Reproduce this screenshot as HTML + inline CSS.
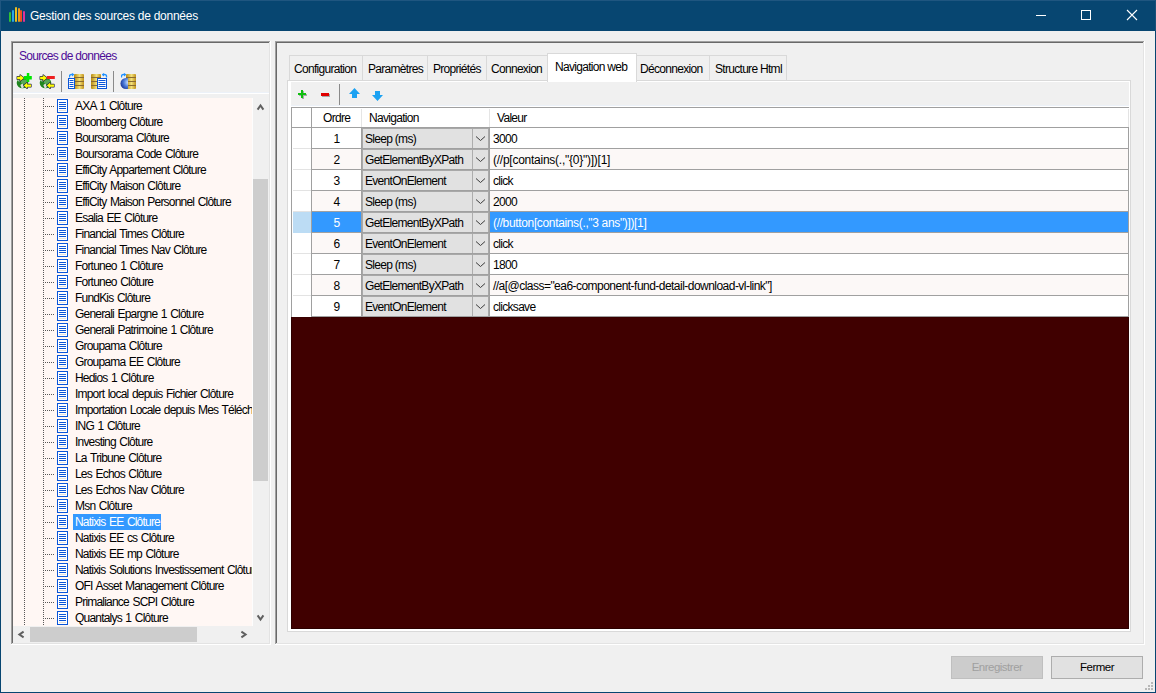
<!DOCTYPE html><html><head><meta charset="utf-8"><style>
html,body{margin:0;padding:0;}
body{width:1156px;height:693px;position:relative;overflow:hidden;background:#f0f0f0;font-family:"Liberation Sans",sans-serif;}
div,span,svg{position:absolute;}
.t{white-space:nowrap;line-height:14px;}
</style></head><body>
<div style="left:0px;top:0px;width:1156px;height:31px;background:#074671;"></div>
<div style="left:0px;top:31px;width:1px;height:662px;background:#074671;"></div>
<div style="left:1155px;top:31px;width:1px;height:662px;background:#074671;"></div>
<div style="left:0px;top:692px;width:1156px;height:1px;background:#074671;"></div>
<div style="left:0px;top:0px;width:1156px;height:1px;background:#1f5680;"></div>
<div style="left:0px;top:0px;width:1px;height:31px;background:#1f5680;"></div>
<div style="left:1155px;top:0px;width:1px;height:31px;background:#1a5079;"></div>
<div style="left:9px;top:12px;width:2px;height:10px;background:#2fc234;border-radius:1px;"></div>
<div style="left:12px;top:10px;width:2px;height:12px;background:#2aa8e6;border-radius:1px;"></div>
<div style="left:15px;top:7px;width:2px;height:15px;background:#e8c020;border-radius:1px;"></div>
<div style="left:18px;top:8px;width:2px;height:14px;background:#f09a1a;border-radius:1px;"></div>
<div style="left:20px;top:10px;width:2px;height:12px;background:#f0501e;border-radius:1px;"></div>
<div style="left:23px;top:11px;width:2px;height:11px;background:#e0309a;border-radius:1px;"></div>
<span class="t" style="left:30px;top:8px;color:#fff;font-size:12px;letter-spacing:-0.25px;line-height:16px;">Gestion des sources de données</span>
<div style="left:1036px;top:15px;width:10px;height:1px;background:#fff;"></div>
<div style="left:1081px;top:10px;width:10px;height:10px;background:transparent;border:1px solid #fff;box-sizing:border-box;"></div>
<svg style="left:1126px;top:9px" width="12" height="12" viewBox="0 0 12 12"><path d="M1 1L11 11M11 1L1 11" stroke="#fff" stroke-width="1.1"/></svg>
<div style="left:11px;top:41px;width:259px;height:1px;background:#a0a0a0;"></div>
<div style="left:11px;top:41px;width:1px;height:603px;background:#a0a0a0;"></div>
<div style="left:12px;top:42px;width:257px;height:1px;background:#696969;"></div>
<div style="left:12px;top:42px;width:1px;height:601px;background:#696969;"></div>
<div style="left:12px;top:643px;width:258px;height:1px;background:#e3e3e3;"></div>
<div style="left:269px;top:42px;width:1px;height:602px;background:#e3e3e3;"></div>
<div style="left:11px;top:644px;width:260px;height:1px;background:#fff;"></div>
<div style="left:270px;top:41px;width:1px;height:604px;background:#fff;"></div>
<div style="left:275px;top:41px;width:869px;height:1px;background:#a0a0a0;"></div>
<div style="left:275px;top:41px;width:1px;height:603px;background:#a0a0a0;"></div>
<div style="left:276px;top:42px;width:867px;height:1px;background:#696969;"></div>
<div style="left:276px;top:42px;width:1px;height:601px;background:#696969;"></div>
<div style="left:276px;top:643px;width:868px;height:1px;background:#e3e3e3;"></div>
<div style="left:1143px;top:42px;width:1px;height:602px;background:#e3e3e3;"></div>
<div style="left:275px;top:644px;width:870px;height:1px;background:#fff;"></div>
<div style="left:1144px;top:41px;width:1px;height:604px;background:#fff;"></div>
<span class="t" style="left:19px;top:49px;color:#4e0c98;font-size:12px;letter-spacing:-0.7px;">Sources de données</span>
<div style="left:13px;top:92px;width:256px;height:1px;background:#ecf1f8;"></div>
<div style="left:13px;top:93px;width:256px;height:1px;background:#fff;"></div>
<div style="left:61px;top:71px;width:1px;height:21px;background:#8a8a8a;"></div>
<div style="left:113px;top:71px;width:1px;height:21px;background:#8a8a8a;"></div>
<svg style="left:16px;top:73px" width="16" height="16" viewBox="0 0 16 16"><ellipse cx="6.5" cy="10" rx="5.8" ry="5.2" fill="#1f861f"/><ellipse cx="8" cy="8.8" rx="3.2" ry="2.2" fill="#58a858"/><path d="M4.3 12L6.5 10.5L8 13L7 15.3L5.5 15Z" fill="#dcdcdc"/><path d="M1.5 7.5L3.5 7L3.5 9Z" fill="#d0e0d0"/><path d="M1.2 3.7H4.2V1.9L7.9 5L4.2 8.1V6.3H1.2Z" fill="#ffff00" stroke="#28284a" stroke-width="1.3" paint-order="stroke" stroke-linejoin="round"/><rect x="10.8" y="0" width="2.5" height="9" fill="#00e600"/><rect x="7.8" y="3" width="8" height="3.5" fill="#00e600"/><path d="M15 11.4H11.2V9.6L7.9 12.6L11.2 15.4V13.8H15Z" fill="#ffff00" stroke="#28284a" stroke-width="1.3" paint-order="stroke" stroke-linejoin="round"/></svg>
<svg style="left:39px;top:73px" width="16" height="16" viewBox="0 0 16 16"><ellipse cx="6.5" cy="10" rx="5.8" ry="5.2" fill="#1f861f"/><ellipse cx="8" cy="8.8" rx="3.2" ry="2.2" fill="#58a858"/><path d="M4.3 12L6.5 10.5L8 13L7 15.3L5.5 15Z" fill="#dcdcdc"/><path d="M1.5 7.5L3.5 7L3.5 9Z" fill="#d0e0d0"/><path d="M1.2 3.7H4.2V1.9L7.9 5L4.2 8.1V6.3H1.2Z" fill="#ffff00" stroke="#28284a" stroke-width="1.3" paint-order="stroke" stroke-linejoin="round"/><rect x="7.8" y="3" width="8" height="3" fill="#ee2020"/><path d="M15 11.4H11.2V9.6L7.9 12.6L11.2 15.4V13.8H15Z" fill="#ffff00" stroke="#28284a" stroke-width="1.3" paint-order="stroke" stroke-linejoin="round"/></svg>
<svg style="left:74px;top:74px" width="10" height="15" viewBox="0 0 10 15"><defs><linearGradient id="gg74" x1="0" x2="1"><stop offset="0" stop-color="#b88a10"/><stop offset="0.55" stop-color="#f2e07a"/><stop offset="1" stop-color="#c09018"/></linearGradient></defs><rect x="0" y="0" width="10" height="15" rx="1" fill="url(#gg74)"/><rect x="0" y="3" width="10" height="1" fill="#8a6a30"/><rect x="0" y="7" width="10" height="1" fill="#8a6a30"/><rect x="0" y="11" width="10" height="1" fill="#8a6a30"/></svg>
<svg style="left:68px;top:78px" width="7" height="11" viewBox="0 0 7 11"><rect x="0.5" y="0.5" width="6" height="10" fill="#fff" stroke="#0a55d8" stroke-width="1"/><rect x="1.5" y="2" width="4" height="1" fill="#0a55d8"/><rect x="1.5" y="4" width="4" height="1" fill="#0a55d8"/><rect x="1.5" y="6" width="4" height="1" fill="#0a55d8"/><rect x="1.5" y="8" width="4" height="1" fill="#0a55d8"/></svg>
<svg style="left:69px;top:73px" width="6" height="5" viewBox="0 0 6 5"><g ><path d="M0.5 4.5V3C0.5 1.8 1.5 1.5 2.5 1.5H3.5" stroke="#1e90ff" stroke-width="1.3" fill="none"/><path d="M3 0L5.5 1.5L3 3.5Z" fill="#1e90ff"/></g></svg>
<svg style="left:91px;top:74px" width="10" height="15" viewBox="0 0 10 15"><defs><linearGradient id="gg91" x1="0" x2="1"><stop offset="0" stop-color="#b88a10"/><stop offset="0.55" stop-color="#f2e07a"/><stop offset="1" stop-color="#c09018"/></linearGradient></defs><rect x="0" y="0" width="10" height="15" rx="1" fill="url(#gg91)"/><rect x="0" y="3" width="10" height="1" fill="#8a6a30"/><rect x="0" y="7" width="10" height="1" fill="#8a6a30"/><rect x="0" y="11" width="10" height="1" fill="#8a6a30"/></svg>
<svg style="left:97px;top:78px" width="10" height="11" viewBox="0 0 10 11"><rect x="0.5" y="0.5" width="9" height="10" fill="#fff" stroke="#0a55d8" stroke-width="1"/><rect x="1.5" y="2" width="7" height="1" fill="#0a55d8"/><rect x="1.5" y="4" width="7" height="1" fill="#0a55d8"/><rect x="1.5" y="6" width="7" height="1" fill="#0a55d8"/><rect x="1.5" y="8" width="7" height="1" fill="#0a55d8"/></svg>
<svg style="left:102px;top:73px" width="6" height="5" viewBox="0 0 6 5"><g transform="translate(5,0) scale(-1,1)"><path d="M0.5 4.5V3C0.5 1.8 1.5 1.5 2.5 1.5H3.5" stroke="#1e90ff" stroke-width="1.3" fill="none"/><path d="M3 0L5.5 1.5L3 3.5Z" fill="#1e90ff"/></g></svg>
<svg style="left:126px;top:74px" width="10" height="15" viewBox="0 0 10 15"><defs><linearGradient id="gg126" x1="0" x2="1"><stop offset="0" stop-color="#b88a10"/><stop offset="0.55" stop-color="#f2e07a"/><stop offset="1" stop-color="#c09018"/></linearGradient></defs><rect x="0" y="0" width="10" height="15" rx="1" fill="url(#gg126)"/><rect x="0" y="3" width="10" height="1" fill="#8a6a30"/><rect x="0" y="7" width="10" height="1" fill="#8a6a30"/><rect x="0" y="11" width="10" height="1" fill="#8a6a30"/></svg>
<svg style="left:120px;top:78px" width="8" height="11" viewBox="0 0 8 11"><defs><radialGradient id="gb" cx="0.7" cy="0.4" r="0.8"><stop offset="0" stop-color="#cfe4ff"/><stop offset="0.5" stop-color="#4a7ad8"/><stop offset="1" stop-color="#10288a"/></radialGradient></defs><ellipse cx="6" cy="5.5" rx="5.5" ry="5.5" fill="url(#gb)"/></svg>
<svg style="left:121px;top:73px" width="6" height="5" viewBox="0 0 6 5"><g ><path d="M0.5 4.5V3C0.5 1.8 1.5 1.5 2.5 1.5H3.5" stroke="#1e90ff" stroke-width="1.3" fill="none"/><path d="M3 0L5.5 1.5L3 3.5Z" fill="#1e90ff"/></g></svg>
<div style="left:13px;top:98px;width:240px;height:528px;background:#fff7f4;"></div>
<div style="left:14px;top:98px;width:239px;height:528px;overflow:hidden">
<svg style="left:-14px;top:-98px" width="260" height="630"><path d="M24 98h1v1h-1zM43 98h1v1h-1zM24 100h1v1h-1zM43 100h1v1h-1zM24 102h1v1h-1zM43 102h1v1h-1zM24 104h1v1h-1zM43 104h1v1h-1zM24 106h1v1h-1zM43 106h1v1h-1zM24 108h1v1h-1zM43 108h1v1h-1zM24 110h1v1h-1zM43 110h1v1h-1zM24 112h1v1h-1zM43 112h1v1h-1zM24 114h1v1h-1zM43 114h1v1h-1zM24 116h1v1h-1zM43 116h1v1h-1zM24 118h1v1h-1zM43 118h1v1h-1zM24 120h1v1h-1zM43 120h1v1h-1zM24 122h1v1h-1zM43 122h1v1h-1zM24 124h1v1h-1zM43 124h1v1h-1zM24 126h1v1h-1zM43 126h1v1h-1zM24 128h1v1h-1zM43 128h1v1h-1zM24 130h1v1h-1zM43 130h1v1h-1zM24 132h1v1h-1zM43 132h1v1h-1zM24 134h1v1h-1zM43 134h1v1h-1zM24 136h1v1h-1zM43 136h1v1h-1zM24 138h1v1h-1zM43 138h1v1h-1zM24 140h1v1h-1zM43 140h1v1h-1zM24 142h1v1h-1zM43 142h1v1h-1zM24 144h1v1h-1zM43 144h1v1h-1zM24 146h1v1h-1zM43 146h1v1h-1zM24 148h1v1h-1zM43 148h1v1h-1zM24 150h1v1h-1zM43 150h1v1h-1zM24 152h1v1h-1zM43 152h1v1h-1zM24 154h1v1h-1zM43 154h1v1h-1zM24 156h1v1h-1zM43 156h1v1h-1zM24 158h1v1h-1zM43 158h1v1h-1zM24 160h1v1h-1zM43 160h1v1h-1zM24 162h1v1h-1zM43 162h1v1h-1zM24 164h1v1h-1zM43 164h1v1h-1zM24 166h1v1h-1zM43 166h1v1h-1zM24 168h1v1h-1zM43 168h1v1h-1zM24 170h1v1h-1zM43 170h1v1h-1zM24 172h1v1h-1zM43 172h1v1h-1zM24 174h1v1h-1zM43 174h1v1h-1zM24 176h1v1h-1zM43 176h1v1h-1zM24 178h1v1h-1zM43 178h1v1h-1zM24 180h1v1h-1zM43 180h1v1h-1zM24 182h1v1h-1zM43 182h1v1h-1zM24 184h1v1h-1zM43 184h1v1h-1zM24 186h1v1h-1zM43 186h1v1h-1zM24 188h1v1h-1zM43 188h1v1h-1zM24 190h1v1h-1zM43 190h1v1h-1zM24 192h1v1h-1zM43 192h1v1h-1zM24 194h1v1h-1zM43 194h1v1h-1zM24 196h1v1h-1zM43 196h1v1h-1zM24 198h1v1h-1zM43 198h1v1h-1zM24 200h1v1h-1zM43 200h1v1h-1zM24 202h1v1h-1zM43 202h1v1h-1zM24 204h1v1h-1zM43 204h1v1h-1zM24 206h1v1h-1zM43 206h1v1h-1zM24 208h1v1h-1zM43 208h1v1h-1zM24 210h1v1h-1zM43 210h1v1h-1zM24 212h1v1h-1zM43 212h1v1h-1zM24 214h1v1h-1zM43 214h1v1h-1zM24 216h1v1h-1zM43 216h1v1h-1zM24 218h1v1h-1zM43 218h1v1h-1zM24 220h1v1h-1zM43 220h1v1h-1zM24 222h1v1h-1zM43 222h1v1h-1zM24 224h1v1h-1zM43 224h1v1h-1zM24 226h1v1h-1zM43 226h1v1h-1zM24 228h1v1h-1zM43 228h1v1h-1zM24 230h1v1h-1zM43 230h1v1h-1zM24 232h1v1h-1zM43 232h1v1h-1zM24 234h1v1h-1zM43 234h1v1h-1zM24 236h1v1h-1zM43 236h1v1h-1zM24 238h1v1h-1zM43 238h1v1h-1zM24 240h1v1h-1zM43 240h1v1h-1zM24 242h1v1h-1zM43 242h1v1h-1zM24 244h1v1h-1zM43 244h1v1h-1zM24 246h1v1h-1zM43 246h1v1h-1zM24 248h1v1h-1zM43 248h1v1h-1zM24 250h1v1h-1zM43 250h1v1h-1zM24 252h1v1h-1zM43 252h1v1h-1zM24 254h1v1h-1zM43 254h1v1h-1zM24 256h1v1h-1zM43 256h1v1h-1zM24 258h1v1h-1zM43 258h1v1h-1zM24 260h1v1h-1zM43 260h1v1h-1zM24 262h1v1h-1zM43 262h1v1h-1zM24 264h1v1h-1zM43 264h1v1h-1zM24 266h1v1h-1zM43 266h1v1h-1zM24 268h1v1h-1zM43 268h1v1h-1zM24 270h1v1h-1zM43 270h1v1h-1zM24 272h1v1h-1zM43 272h1v1h-1zM24 274h1v1h-1zM43 274h1v1h-1zM24 276h1v1h-1zM43 276h1v1h-1zM24 278h1v1h-1zM43 278h1v1h-1zM24 280h1v1h-1zM43 280h1v1h-1zM24 282h1v1h-1zM43 282h1v1h-1zM24 284h1v1h-1zM43 284h1v1h-1zM24 286h1v1h-1zM43 286h1v1h-1zM24 288h1v1h-1zM43 288h1v1h-1zM24 290h1v1h-1zM43 290h1v1h-1zM24 292h1v1h-1zM43 292h1v1h-1zM24 294h1v1h-1zM43 294h1v1h-1zM24 296h1v1h-1zM43 296h1v1h-1zM24 298h1v1h-1zM43 298h1v1h-1zM24 300h1v1h-1zM43 300h1v1h-1zM24 302h1v1h-1zM43 302h1v1h-1zM24 304h1v1h-1zM43 304h1v1h-1zM24 306h1v1h-1zM43 306h1v1h-1zM24 308h1v1h-1zM43 308h1v1h-1zM24 310h1v1h-1zM43 310h1v1h-1zM24 312h1v1h-1zM43 312h1v1h-1zM24 314h1v1h-1zM43 314h1v1h-1zM24 316h1v1h-1zM43 316h1v1h-1zM24 318h1v1h-1zM43 318h1v1h-1zM24 320h1v1h-1zM43 320h1v1h-1zM24 322h1v1h-1zM43 322h1v1h-1zM24 324h1v1h-1zM43 324h1v1h-1zM24 326h1v1h-1zM43 326h1v1h-1zM24 328h1v1h-1zM43 328h1v1h-1zM24 330h1v1h-1zM43 330h1v1h-1zM24 332h1v1h-1zM43 332h1v1h-1zM24 334h1v1h-1zM43 334h1v1h-1zM24 336h1v1h-1zM43 336h1v1h-1zM24 338h1v1h-1zM43 338h1v1h-1zM24 340h1v1h-1zM43 340h1v1h-1zM24 342h1v1h-1zM43 342h1v1h-1zM24 344h1v1h-1zM43 344h1v1h-1zM24 346h1v1h-1zM43 346h1v1h-1zM24 348h1v1h-1zM43 348h1v1h-1zM24 350h1v1h-1zM43 350h1v1h-1zM24 352h1v1h-1zM43 352h1v1h-1zM24 354h1v1h-1zM43 354h1v1h-1zM24 356h1v1h-1zM43 356h1v1h-1zM24 358h1v1h-1zM43 358h1v1h-1zM24 360h1v1h-1zM43 360h1v1h-1zM24 362h1v1h-1zM43 362h1v1h-1zM24 364h1v1h-1zM43 364h1v1h-1zM24 366h1v1h-1zM43 366h1v1h-1zM24 368h1v1h-1zM43 368h1v1h-1zM24 370h1v1h-1zM43 370h1v1h-1zM24 372h1v1h-1zM43 372h1v1h-1zM24 374h1v1h-1zM43 374h1v1h-1zM24 376h1v1h-1zM43 376h1v1h-1zM24 378h1v1h-1zM43 378h1v1h-1zM24 380h1v1h-1zM43 380h1v1h-1zM24 382h1v1h-1zM43 382h1v1h-1zM24 384h1v1h-1zM43 384h1v1h-1zM24 386h1v1h-1zM43 386h1v1h-1zM24 388h1v1h-1zM43 388h1v1h-1zM24 390h1v1h-1zM43 390h1v1h-1zM24 392h1v1h-1zM43 392h1v1h-1zM24 394h1v1h-1zM43 394h1v1h-1zM24 396h1v1h-1zM43 396h1v1h-1zM24 398h1v1h-1zM43 398h1v1h-1zM24 400h1v1h-1zM43 400h1v1h-1zM24 402h1v1h-1zM43 402h1v1h-1zM24 404h1v1h-1zM43 404h1v1h-1zM24 406h1v1h-1zM43 406h1v1h-1zM24 408h1v1h-1zM43 408h1v1h-1zM24 410h1v1h-1zM43 410h1v1h-1zM24 412h1v1h-1zM43 412h1v1h-1zM24 414h1v1h-1zM43 414h1v1h-1zM24 416h1v1h-1zM43 416h1v1h-1zM24 418h1v1h-1zM43 418h1v1h-1zM24 420h1v1h-1zM43 420h1v1h-1zM24 422h1v1h-1zM43 422h1v1h-1zM24 424h1v1h-1zM43 424h1v1h-1zM24 426h1v1h-1zM43 426h1v1h-1zM24 428h1v1h-1zM43 428h1v1h-1zM24 430h1v1h-1zM43 430h1v1h-1zM24 432h1v1h-1zM43 432h1v1h-1zM24 434h1v1h-1zM43 434h1v1h-1zM24 436h1v1h-1zM43 436h1v1h-1zM24 438h1v1h-1zM43 438h1v1h-1zM24 440h1v1h-1zM43 440h1v1h-1zM24 442h1v1h-1zM43 442h1v1h-1zM24 444h1v1h-1zM43 444h1v1h-1zM24 446h1v1h-1zM43 446h1v1h-1zM24 448h1v1h-1zM43 448h1v1h-1zM24 450h1v1h-1zM43 450h1v1h-1zM24 452h1v1h-1zM43 452h1v1h-1zM24 454h1v1h-1zM43 454h1v1h-1zM24 456h1v1h-1zM43 456h1v1h-1zM24 458h1v1h-1zM43 458h1v1h-1zM24 460h1v1h-1zM43 460h1v1h-1zM24 462h1v1h-1zM43 462h1v1h-1zM24 464h1v1h-1zM43 464h1v1h-1zM24 466h1v1h-1zM43 466h1v1h-1zM24 468h1v1h-1zM43 468h1v1h-1zM24 470h1v1h-1zM43 470h1v1h-1zM24 472h1v1h-1zM43 472h1v1h-1zM24 474h1v1h-1zM43 474h1v1h-1zM24 476h1v1h-1zM43 476h1v1h-1zM24 478h1v1h-1zM43 478h1v1h-1zM24 480h1v1h-1zM43 480h1v1h-1zM24 482h1v1h-1zM43 482h1v1h-1zM24 484h1v1h-1zM43 484h1v1h-1zM24 486h1v1h-1zM43 486h1v1h-1zM24 488h1v1h-1zM43 488h1v1h-1zM24 490h1v1h-1zM43 490h1v1h-1zM24 492h1v1h-1zM43 492h1v1h-1zM24 494h1v1h-1zM43 494h1v1h-1zM24 496h1v1h-1zM43 496h1v1h-1zM24 498h1v1h-1zM43 498h1v1h-1zM24 500h1v1h-1zM43 500h1v1h-1zM24 502h1v1h-1zM43 502h1v1h-1zM24 504h1v1h-1zM43 504h1v1h-1zM24 506h1v1h-1zM43 506h1v1h-1zM24 508h1v1h-1zM43 508h1v1h-1zM24 510h1v1h-1zM43 510h1v1h-1zM24 512h1v1h-1zM43 512h1v1h-1zM24 514h1v1h-1zM43 514h1v1h-1zM24 516h1v1h-1zM43 516h1v1h-1zM24 518h1v1h-1zM43 518h1v1h-1zM24 520h1v1h-1zM43 520h1v1h-1zM24 522h1v1h-1zM43 522h1v1h-1zM24 524h1v1h-1zM43 524h1v1h-1zM24 526h1v1h-1zM43 526h1v1h-1zM24 528h1v1h-1zM43 528h1v1h-1zM24 530h1v1h-1zM43 530h1v1h-1zM24 532h1v1h-1zM43 532h1v1h-1zM24 534h1v1h-1zM43 534h1v1h-1zM24 536h1v1h-1zM43 536h1v1h-1zM24 538h1v1h-1zM43 538h1v1h-1zM24 540h1v1h-1zM43 540h1v1h-1zM24 542h1v1h-1zM43 542h1v1h-1zM24 544h1v1h-1zM43 544h1v1h-1zM24 546h1v1h-1zM43 546h1v1h-1zM24 548h1v1h-1zM43 548h1v1h-1zM24 550h1v1h-1zM43 550h1v1h-1zM24 552h1v1h-1zM43 552h1v1h-1zM24 554h1v1h-1zM43 554h1v1h-1zM24 556h1v1h-1zM43 556h1v1h-1zM24 558h1v1h-1zM43 558h1v1h-1zM24 560h1v1h-1zM43 560h1v1h-1zM24 562h1v1h-1zM43 562h1v1h-1zM24 564h1v1h-1zM43 564h1v1h-1zM24 566h1v1h-1zM43 566h1v1h-1zM24 568h1v1h-1zM43 568h1v1h-1zM24 570h1v1h-1zM43 570h1v1h-1zM24 572h1v1h-1zM43 572h1v1h-1zM24 574h1v1h-1zM43 574h1v1h-1zM24 576h1v1h-1zM43 576h1v1h-1zM24 578h1v1h-1zM43 578h1v1h-1zM24 580h1v1h-1zM43 580h1v1h-1zM24 582h1v1h-1zM43 582h1v1h-1zM24 584h1v1h-1zM43 584h1v1h-1zM24 586h1v1h-1zM43 586h1v1h-1zM24 588h1v1h-1zM43 588h1v1h-1zM24 590h1v1h-1zM43 590h1v1h-1zM24 592h1v1h-1zM43 592h1v1h-1zM24 594h1v1h-1zM43 594h1v1h-1zM24 596h1v1h-1zM43 596h1v1h-1zM24 598h1v1h-1zM43 598h1v1h-1zM24 600h1v1h-1zM43 600h1v1h-1zM24 602h1v1h-1zM43 602h1v1h-1zM24 604h1v1h-1zM43 604h1v1h-1zM24 606h1v1h-1zM43 606h1v1h-1zM24 608h1v1h-1zM43 608h1v1h-1zM24 610h1v1h-1zM43 610h1v1h-1zM24 612h1v1h-1zM43 612h1v1h-1zM24 614h1v1h-1zM43 614h1v1h-1zM24 616h1v1h-1zM43 616h1v1h-1zM24 618h1v1h-1zM43 618h1v1h-1zM24 620h1v1h-1zM43 620h1v1h-1zM24 622h1v1h-1zM43 622h1v1h-1zM24 624h1v1h-1zM43 624h1v1h-1zM45 106h1v1h-1zM47 106h1v1h-1zM49 106h1v1h-1zM51 106h1v1h-1zM53 106h1v1h-1zM45 122h1v1h-1zM47 122h1v1h-1zM49 122h1v1h-1zM51 122h1v1h-1zM53 122h1v1h-1zM45 138h1v1h-1zM47 138h1v1h-1zM49 138h1v1h-1zM51 138h1v1h-1zM53 138h1v1h-1zM45 154h1v1h-1zM47 154h1v1h-1zM49 154h1v1h-1zM51 154h1v1h-1zM53 154h1v1h-1zM45 170h1v1h-1zM47 170h1v1h-1zM49 170h1v1h-1zM51 170h1v1h-1zM53 170h1v1h-1zM45 186h1v1h-1zM47 186h1v1h-1zM49 186h1v1h-1zM51 186h1v1h-1zM53 186h1v1h-1zM45 202h1v1h-1zM47 202h1v1h-1zM49 202h1v1h-1zM51 202h1v1h-1zM53 202h1v1h-1zM45 218h1v1h-1zM47 218h1v1h-1zM49 218h1v1h-1zM51 218h1v1h-1zM53 218h1v1h-1zM45 234h1v1h-1zM47 234h1v1h-1zM49 234h1v1h-1zM51 234h1v1h-1zM53 234h1v1h-1zM45 250h1v1h-1zM47 250h1v1h-1zM49 250h1v1h-1zM51 250h1v1h-1zM53 250h1v1h-1zM45 266h1v1h-1zM47 266h1v1h-1zM49 266h1v1h-1zM51 266h1v1h-1zM53 266h1v1h-1zM45 282h1v1h-1zM47 282h1v1h-1zM49 282h1v1h-1zM51 282h1v1h-1zM53 282h1v1h-1zM45 298h1v1h-1zM47 298h1v1h-1zM49 298h1v1h-1zM51 298h1v1h-1zM53 298h1v1h-1zM45 314h1v1h-1zM47 314h1v1h-1zM49 314h1v1h-1zM51 314h1v1h-1zM53 314h1v1h-1zM45 330h1v1h-1zM47 330h1v1h-1zM49 330h1v1h-1zM51 330h1v1h-1zM53 330h1v1h-1zM45 346h1v1h-1zM47 346h1v1h-1zM49 346h1v1h-1zM51 346h1v1h-1zM53 346h1v1h-1zM45 362h1v1h-1zM47 362h1v1h-1zM49 362h1v1h-1zM51 362h1v1h-1zM53 362h1v1h-1zM45 378h1v1h-1zM47 378h1v1h-1zM49 378h1v1h-1zM51 378h1v1h-1zM53 378h1v1h-1zM45 394h1v1h-1zM47 394h1v1h-1zM49 394h1v1h-1zM51 394h1v1h-1zM53 394h1v1h-1zM45 410h1v1h-1zM47 410h1v1h-1zM49 410h1v1h-1zM51 410h1v1h-1zM53 410h1v1h-1zM45 426h1v1h-1zM47 426h1v1h-1zM49 426h1v1h-1zM51 426h1v1h-1zM53 426h1v1h-1zM45 442h1v1h-1zM47 442h1v1h-1zM49 442h1v1h-1zM51 442h1v1h-1zM53 442h1v1h-1zM45 458h1v1h-1zM47 458h1v1h-1zM49 458h1v1h-1zM51 458h1v1h-1zM53 458h1v1h-1zM45 474h1v1h-1zM47 474h1v1h-1zM49 474h1v1h-1zM51 474h1v1h-1zM53 474h1v1h-1zM45 490h1v1h-1zM47 490h1v1h-1zM49 490h1v1h-1zM51 490h1v1h-1zM53 490h1v1h-1zM45 506h1v1h-1zM47 506h1v1h-1zM49 506h1v1h-1zM51 506h1v1h-1zM53 506h1v1h-1zM45 522h1v1h-1zM47 522h1v1h-1zM49 522h1v1h-1zM51 522h1v1h-1zM53 522h1v1h-1zM45 538h1v1h-1zM47 538h1v1h-1zM49 538h1v1h-1zM51 538h1v1h-1zM53 538h1v1h-1zM45 554h1v1h-1zM47 554h1v1h-1zM49 554h1v1h-1zM51 554h1v1h-1zM53 554h1v1h-1zM45 570h1v1h-1zM47 570h1v1h-1zM49 570h1v1h-1zM51 570h1v1h-1zM53 570h1v1h-1zM45 586h1v1h-1zM47 586h1v1h-1zM49 586h1v1h-1zM51 586h1v1h-1zM53 586h1v1h-1zM45 602h1v1h-1zM47 602h1v1h-1zM49 602h1v1h-1zM51 602h1v1h-1zM53 602h1v1h-1zM45 618h1v1h-1zM47 618h1v1h-1zM49 618h1v1h-1zM51 618h1v1h-1zM53 618h1v1h-1z" fill="#585858"/></svg>
<div style="left:43px;top:1px;width:9px;height:12px;border:1px solid #0a55d8;background:#fff"></div>
<div style="left:45px;top:4px;width:7px;height:1px;background:#0a55d8"></div><div style="left:45px;top:6px;width:7px;height:1px;background:#0a55d8"></div><div style="left:45px;top:8px;width:7px;height:1px;background:#0a55d8"></div><div style="left:45px;top:10px;width:7px;height:1px;background:#0a55d8"></div>
<div style="left:45px;top:12px;width:7px;height:1px;background:#e4e0da"></div>
<span class="t" style="left:61px;top:1px;color:#000;font-size:12px;letter-spacing:-0.8px;word-spacing:1px;">AXA 1 Clôture</span>
<div style="left:43px;top:17px;width:9px;height:12px;border:1px solid #0a55d8;background:#fff"></div>
<div style="left:45px;top:20px;width:7px;height:1px;background:#0a55d8"></div><div style="left:45px;top:22px;width:7px;height:1px;background:#0a55d8"></div><div style="left:45px;top:24px;width:7px;height:1px;background:#0a55d8"></div><div style="left:45px;top:26px;width:7px;height:1px;background:#0a55d8"></div>
<div style="left:45px;top:28px;width:7px;height:1px;background:#e4e0da"></div>
<span class="t" style="left:61px;top:17px;color:#000;font-size:12px;letter-spacing:-0.8px;word-spacing:1px;">Bloomberg Clôture</span>
<div style="left:43px;top:33px;width:9px;height:12px;border:1px solid #0a55d8;background:#fff"></div>
<div style="left:45px;top:36px;width:7px;height:1px;background:#0a55d8"></div><div style="left:45px;top:38px;width:7px;height:1px;background:#0a55d8"></div><div style="left:45px;top:40px;width:7px;height:1px;background:#0a55d8"></div><div style="left:45px;top:42px;width:7px;height:1px;background:#0a55d8"></div>
<div style="left:45px;top:44px;width:7px;height:1px;background:#e4e0da"></div>
<span class="t" style="left:61px;top:33px;color:#000;font-size:12px;letter-spacing:-0.8px;word-spacing:1px;">Boursorama Clôture</span>
<div style="left:43px;top:49px;width:9px;height:12px;border:1px solid #0a55d8;background:#fff"></div>
<div style="left:45px;top:52px;width:7px;height:1px;background:#0a55d8"></div><div style="left:45px;top:54px;width:7px;height:1px;background:#0a55d8"></div><div style="left:45px;top:56px;width:7px;height:1px;background:#0a55d8"></div><div style="left:45px;top:58px;width:7px;height:1px;background:#0a55d8"></div>
<div style="left:45px;top:60px;width:7px;height:1px;background:#e4e0da"></div>
<span class="t" style="left:61px;top:49px;color:#000;font-size:12px;letter-spacing:-0.8px;word-spacing:1px;">Boursorama Code Clôture</span>
<div style="left:43px;top:65px;width:9px;height:12px;border:1px solid #0a55d8;background:#fff"></div>
<div style="left:45px;top:68px;width:7px;height:1px;background:#0a55d8"></div><div style="left:45px;top:70px;width:7px;height:1px;background:#0a55d8"></div><div style="left:45px;top:72px;width:7px;height:1px;background:#0a55d8"></div><div style="left:45px;top:74px;width:7px;height:1px;background:#0a55d8"></div>
<div style="left:45px;top:76px;width:7px;height:1px;background:#e4e0da"></div>
<span class="t" style="left:61px;top:65px;color:#000;font-size:12px;letter-spacing:-0.8px;word-spacing:1px;">EffiCity Appartement Clôture</span>
<div style="left:43px;top:81px;width:9px;height:12px;border:1px solid #0a55d8;background:#fff"></div>
<div style="left:45px;top:84px;width:7px;height:1px;background:#0a55d8"></div><div style="left:45px;top:86px;width:7px;height:1px;background:#0a55d8"></div><div style="left:45px;top:88px;width:7px;height:1px;background:#0a55d8"></div><div style="left:45px;top:90px;width:7px;height:1px;background:#0a55d8"></div>
<div style="left:45px;top:92px;width:7px;height:1px;background:#e4e0da"></div>
<span class="t" style="left:61px;top:81px;color:#000;font-size:12px;letter-spacing:-0.8px;word-spacing:1px;">EffiCity Maison Clôture</span>
<div style="left:43px;top:97px;width:9px;height:12px;border:1px solid #0a55d8;background:#fff"></div>
<div style="left:45px;top:100px;width:7px;height:1px;background:#0a55d8"></div><div style="left:45px;top:102px;width:7px;height:1px;background:#0a55d8"></div><div style="left:45px;top:104px;width:7px;height:1px;background:#0a55d8"></div><div style="left:45px;top:106px;width:7px;height:1px;background:#0a55d8"></div>
<div style="left:45px;top:108px;width:7px;height:1px;background:#e4e0da"></div>
<span class="t" style="left:61px;top:97px;color:#000;font-size:12px;letter-spacing:-0.8px;word-spacing:1px;">EffiCity Maison Personnel Clôture</span>
<div style="left:43px;top:113px;width:9px;height:12px;border:1px solid #0a55d8;background:#fff"></div>
<div style="left:45px;top:116px;width:7px;height:1px;background:#0a55d8"></div><div style="left:45px;top:118px;width:7px;height:1px;background:#0a55d8"></div><div style="left:45px;top:120px;width:7px;height:1px;background:#0a55d8"></div><div style="left:45px;top:122px;width:7px;height:1px;background:#0a55d8"></div>
<div style="left:45px;top:124px;width:7px;height:1px;background:#e4e0da"></div>
<span class="t" style="left:61px;top:113px;color:#000;font-size:12px;letter-spacing:-0.8px;word-spacing:1px;">Esalia EE Clôture</span>
<div style="left:43px;top:129px;width:9px;height:12px;border:1px solid #0a55d8;background:#fff"></div>
<div style="left:45px;top:132px;width:7px;height:1px;background:#0a55d8"></div><div style="left:45px;top:134px;width:7px;height:1px;background:#0a55d8"></div><div style="left:45px;top:136px;width:7px;height:1px;background:#0a55d8"></div><div style="left:45px;top:138px;width:7px;height:1px;background:#0a55d8"></div>
<div style="left:45px;top:140px;width:7px;height:1px;background:#e4e0da"></div>
<span class="t" style="left:61px;top:129px;color:#000;font-size:12px;letter-spacing:-0.8px;word-spacing:1px;">Financial Times Clôture</span>
<div style="left:43px;top:145px;width:9px;height:12px;border:1px solid #0a55d8;background:#fff"></div>
<div style="left:45px;top:148px;width:7px;height:1px;background:#0a55d8"></div><div style="left:45px;top:150px;width:7px;height:1px;background:#0a55d8"></div><div style="left:45px;top:152px;width:7px;height:1px;background:#0a55d8"></div><div style="left:45px;top:154px;width:7px;height:1px;background:#0a55d8"></div>
<div style="left:45px;top:156px;width:7px;height:1px;background:#e4e0da"></div>
<span class="t" style="left:61px;top:145px;color:#000;font-size:12px;letter-spacing:-0.8px;word-spacing:1px;">Financial Times Nav Clôture</span>
<div style="left:43px;top:161px;width:9px;height:12px;border:1px solid #0a55d8;background:#fff"></div>
<div style="left:45px;top:164px;width:7px;height:1px;background:#0a55d8"></div><div style="left:45px;top:166px;width:7px;height:1px;background:#0a55d8"></div><div style="left:45px;top:168px;width:7px;height:1px;background:#0a55d8"></div><div style="left:45px;top:170px;width:7px;height:1px;background:#0a55d8"></div>
<div style="left:45px;top:172px;width:7px;height:1px;background:#e4e0da"></div>
<span class="t" style="left:61px;top:161px;color:#000;font-size:12px;letter-spacing:-0.8px;word-spacing:1px;">Fortuneo 1 Clôture</span>
<div style="left:43px;top:177px;width:9px;height:12px;border:1px solid #0a55d8;background:#fff"></div>
<div style="left:45px;top:180px;width:7px;height:1px;background:#0a55d8"></div><div style="left:45px;top:182px;width:7px;height:1px;background:#0a55d8"></div><div style="left:45px;top:184px;width:7px;height:1px;background:#0a55d8"></div><div style="left:45px;top:186px;width:7px;height:1px;background:#0a55d8"></div>
<div style="left:45px;top:188px;width:7px;height:1px;background:#e4e0da"></div>
<span class="t" style="left:61px;top:177px;color:#000;font-size:12px;letter-spacing:-0.8px;word-spacing:1px;">Fortuneo Clôture</span>
<div style="left:43px;top:193px;width:9px;height:12px;border:1px solid #0a55d8;background:#fff"></div>
<div style="left:45px;top:196px;width:7px;height:1px;background:#0a55d8"></div><div style="left:45px;top:198px;width:7px;height:1px;background:#0a55d8"></div><div style="left:45px;top:200px;width:7px;height:1px;background:#0a55d8"></div><div style="left:45px;top:202px;width:7px;height:1px;background:#0a55d8"></div>
<div style="left:45px;top:204px;width:7px;height:1px;background:#e4e0da"></div>
<span class="t" style="left:61px;top:193px;color:#000;font-size:12px;letter-spacing:-0.8px;word-spacing:1px;">FundKis Clôture</span>
<div style="left:43px;top:209px;width:9px;height:12px;border:1px solid #0a55d8;background:#fff"></div>
<div style="left:45px;top:212px;width:7px;height:1px;background:#0a55d8"></div><div style="left:45px;top:214px;width:7px;height:1px;background:#0a55d8"></div><div style="left:45px;top:216px;width:7px;height:1px;background:#0a55d8"></div><div style="left:45px;top:218px;width:7px;height:1px;background:#0a55d8"></div>
<div style="left:45px;top:220px;width:7px;height:1px;background:#e4e0da"></div>
<span class="t" style="left:61px;top:209px;color:#000;font-size:12px;letter-spacing:-0.8px;word-spacing:1px;">Generali Epargne 1 Clôture</span>
<div style="left:43px;top:225px;width:9px;height:12px;border:1px solid #0a55d8;background:#fff"></div>
<div style="left:45px;top:228px;width:7px;height:1px;background:#0a55d8"></div><div style="left:45px;top:230px;width:7px;height:1px;background:#0a55d8"></div><div style="left:45px;top:232px;width:7px;height:1px;background:#0a55d8"></div><div style="left:45px;top:234px;width:7px;height:1px;background:#0a55d8"></div>
<div style="left:45px;top:236px;width:7px;height:1px;background:#e4e0da"></div>
<span class="t" style="left:61px;top:225px;color:#000;font-size:12px;letter-spacing:-0.8px;word-spacing:1px;">Generali Patrimoine 1 Clôture</span>
<div style="left:43px;top:241px;width:9px;height:12px;border:1px solid #0a55d8;background:#fff"></div>
<div style="left:45px;top:244px;width:7px;height:1px;background:#0a55d8"></div><div style="left:45px;top:246px;width:7px;height:1px;background:#0a55d8"></div><div style="left:45px;top:248px;width:7px;height:1px;background:#0a55d8"></div><div style="left:45px;top:250px;width:7px;height:1px;background:#0a55d8"></div>
<div style="left:45px;top:252px;width:7px;height:1px;background:#e4e0da"></div>
<span class="t" style="left:61px;top:241px;color:#000;font-size:12px;letter-spacing:-0.8px;word-spacing:1px;">Groupama Clôture</span>
<div style="left:43px;top:257px;width:9px;height:12px;border:1px solid #0a55d8;background:#fff"></div>
<div style="left:45px;top:260px;width:7px;height:1px;background:#0a55d8"></div><div style="left:45px;top:262px;width:7px;height:1px;background:#0a55d8"></div><div style="left:45px;top:264px;width:7px;height:1px;background:#0a55d8"></div><div style="left:45px;top:266px;width:7px;height:1px;background:#0a55d8"></div>
<div style="left:45px;top:268px;width:7px;height:1px;background:#e4e0da"></div>
<span class="t" style="left:61px;top:257px;color:#000;font-size:12px;letter-spacing:-0.8px;word-spacing:1px;">Groupama EE Clôture</span>
<div style="left:43px;top:273px;width:9px;height:12px;border:1px solid #0a55d8;background:#fff"></div>
<div style="left:45px;top:276px;width:7px;height:1px;background:#0a55d8"></div><div style="left:45px;top:278px;width:7px;height:1px;background:#0a55d8"></div><div style="left:45px;top:280px;width:7px;height:1px;background:#0a55d8"></div><div style="left:45px;top:282px;width:7px;height:1px;background:#0a55d8"></div>
<div style="left:45px;top:284px;width:7px;height:1px;background:#e4e0da"></div>
<span class="t" style="left:61px;top:273px;color:#000;font-size:12px;letter-spacing:-0.8px;word-spacing:1px;">Hedios 1 Clôture</span>
<div style="left:43px;top:289px;width:9px;height:12px;border:1px solid #0a55d8;background:#fff"></div>
<div style="left:45px;top:292px;width:7px;height:1px;background:#0a55d8"></div><div style="left:45px;top:294px;width:7px;height:1px;background:#0a55d8"></div><div style="left:45px;top:296px;width:7px;height:1px;background:#0a55d8"></div><div style="left:45px;top:298px;width:7px;height:1px;background:#0a55d8"></div>
<div style="left:45px;top:300px;width:7px;height:1px;background:#e4e0da"></div>
<span class="t" style="left:61px;top:289px;color:#000;font-size:12px;letter-spacing:-0.8px;word-spacing:1px;">Import local depuis Fichier Clôture</span>
<div style="left:43px;top:305px;width:9px;height:12px;border:1px solid #0a55d8;background:#fff"></div>
<div style="left:45px;top:308px;width:7px;height:1px;background:#0a55d8"></div><div style="left:45px;top:310px;width:7px;height:1px;background:#0a55d8"></div><div style="left:45px;top:312px;width:7px;height:1px;background:#0a55d8"></div><div style="left:45px;top:314px;width:7px;height:1px;background:#0a55d8"></div>
<div style="left:45px;top:316px;width:7px;height:1px;background:#e4e0da"></div>
<span class="t" style="left:61px;top:305px;color:#000;font-size:12px;letter-spacing:-0.8px;word-spacing:1px;">Importation Locale depuis Mes Téléchargements Clôture</span>
<div style="left:43px;top:321px;width:9px;height:12px;border:1px solid #0a55d8;background:#fff"></div>
<div style="left:45px;top:324px;width:7px;height:1px;background:#0a55d8"></div><div style="left:45px;top:326px;width:7px;height:1px;background:#0a55d8"></div><div style="left:45px;top:328px;width:7px;height:1px;background:#0a55d8"></div><div style="left:45px;top:330px;width:7px;height:1px;background:#0a55d8"></div>
<div style="left:45px;top:332px;width:7px;height:1px;background:#e4e0da"></div>
<span class="t" style="left:61px;top:321px;color:#000;font-size:12px;letter-spacing:-0.8px;word-spacing:1px;">ING 1 Clôture</span>
<div style="left:43px;top:337px;width:9px;height:12px;border:1px solid #0a55d8;background:#fff"></div>
<div style="left:45px;top:340px;width:7px;height:1px;background:#0a55d8"></div><div style="left:45px;top:342px;width:7px;height:1px;background:#0a55d8"></div><div style="left:45px;top:344px;width:7px;height:1px;background:#0a55d8"></div><div style="left:45px;top:346px;width:7px;height:1px;background:#0a55d8"></div>
<div style="left:45px;top:348px;width:7px;height:1px;background:#e4e0da"></div>
<span class="t" style="left:61px;top:337px;color:#000;font-size:12px;letter-spacing:-0.8px;word-spacing:1px;">Investing Clôture</span>
<div style="left:43px;top:353px;width:9px;height:12px;border:1px solid #0a55d8;background:#fff"></div>
<div style="left:45px;top:356px;width:7px;height:1px;background:#0a55d8"></div><div style="left:45px;top:358px;width:7px;height:1px;background:#0a55d8"></div><div style="left:45px;top:360px;width:7px;height:1px;background:#0a55d8"></div><div style="left:45px;top:362px;width:7px;height:1px;background:#0a55d8"></div>
<div style="left:45px;top:364px;width:7px;height:1px;background:#e4e0da"></div>
<span class="t" style="left:61px;top:353px;color:#000;font-size:12px;letter-spacing:-0.8px;word-spacing:1px;">La Tribune Clôture</span>
<div style="left:43px;top:369px;width:9px;height:12px;border:1px solid #0a55d8;background:#fff"></div>
<div style="left:45px;top:372px;width:7px;height:1px;background:#0a55d8"></div><div style="left:45px;top:374px;width:7px;height:1px;background:#0a55d8"></div><div style="left:45px;top:376px;width:7px;height:1px;background:#0a55d8"></div><div style="left:45px;top:378px;width:7px;height:1px;background:#0a55d8"></div>
<div style="left:45px;top:380px;width:7px;height:1px;background:#e4e0da"></div>
<span class="t" style="left:61px;top:369px;color:#000;font-size:12px;letter-spacing:-0.8px;word-spacing:1px;">Les Echos Clôture</span>
<div style="left:43px;top:385px;width:9px;height:12px;border:1px solid #0a55d8;background:#fff"></div>
<div style="left:45px;top:388px;width:7px;height:1px;background:#0a55d8"></div><div style="left:45px;top:390px;width:7px;height:1px;background:#0a55d8"></div><div style="left:45px;top:392px;width:7px;height:1px;background:#0a55d8"></div><div style="left:45px;top:394px;width:7px;height:1px;background:#0a55d8"></div>
<div style="left:45px;top:396px;width:7px;height:1px;background:#e4e0da"></div>
<span class="t" style="left:61px;top:385px;color:#000;font-size:12px;letter-spacing:-0.8px;word-spacing:1px;">Les Echos Nav Clôture</span>
<div style="left:43px;top:401px;width:9px;height:12px;border:1px solid #0a55d8;background:#fff"></div>
<div style="left:45px;top:404px;width:7px;height:1px;background:#0a55d8"></div><div style="left:45px;top:406px;width:7px;height:1px;background:#0a55d8"></div><div style="left:45px;top:408px;width:7px;height:1px;background:#0a55d8"></div><div style="left:45px;top:410px;width:7px;height:1px;background:#0a55d8"></div>
<div style="left:45px;top:412px;width:7px;height:1px;background:#e4e0da"></div>
<span class="t" style="left:61px;top:401px;color:#000;font-size:12px;letter-spacing:-0.8px;word-spacing:1px;">Msn Clôture</span>
<div style="left:43px;top:417px;width:9px;height:12px;border:1px solid #0a55d8;background:#fff"></div>
<div style="left:45px;top:420px;width:7px;height:1px;background:#0a55d8"></div><div style="left:45px;top:422px;width:7px;height:1px;background:#0a55d8"></div><div style="left:45px;top:424px;width:7px;height:1px;background:#0a55d8"></div><div style="left:45px;top:426px;width:7px;height:1px;background:#0a55d8"></div>
<div style="left:45px;top:428px;width:7px;height:1px;background:#e4e0da"></div>
<div style="left:59px;top:416px;width:88px;height:16px;background:#3399ff"></div>
<span class="t" style="left:61px;top:417px;color:#fff;font-size:12px;letter-spacing:-0.8px;word-spacing:1px;">Natixis EE Clôture</span>
<div style="left:43px;top:433px;width:9px;height:12px;border:1px solid #0a55d8;background:#fff"></div>
<div style="left:45px;top:436px;width:7px;height:1px;background:#0a55d8"></div><div style="left:45px;top:438px;width:7px;height:1px;background:#0a55d8"></div><div style="left:45px;top:440px;width:7px;height:1px;background:#0a55d8"></div><div style="left:45px;top:442px;width:7px;height:1px;background:#0a55d8"></div>
<div style="left:45px;top:444px;width:7px;height:1px;background:#e4e0da"></div>
<span class="t" style="left:61px;top:433px;color:#000;font-size:12px;letter-spacing:-0.8px;word-spacing:1px;">Natixis EE cs Clôture</span>
<div style="left:43px;top:449px;width:9px;height:12px;border:1px solid #0a55d8;background:#fff"></div>
<div style="left:45px;top:452px;width:7px;height:1px;background:#0a55d8"></div><div style="left:45px;top:454px;width:7px;height:1px;background:#0a55d8"></div><div style="left:45px;top:456px;width:7px;height:1px;background:#0a55d8"></div><div style="left:45px;top:458px;width:7px;height:1px;background:#0a55d8"></div>
<div style="left:45px;top:460px;width:7px;height:1px;background:#e4e0da"></div>
<span class="t" style="left:61px;top:449px;color:#000;font-size:12px;letter-spacing:-0.8px;word-spacing:1px;">Natixis EE mp Clôture</span>
<div style="left:43px;top:465px;width:9px;height:12px;border:1px solid #0a55d8;background:#fff"></div>
<div style="left:45px;top:468px;width:7px;height:1px;background:#0a55d8"></div><div style="left:45px;top:470px;width:7px;height:1px;background:#0a55d8"></div><div style="left:45px;top:472px;width:7px;height:1px;background:#0a55d8"></div><div style="left:45px;top:474px;width:7px;height:1px;background:#0a55d8"></div>
<div style="left:45px;top:476px;width:7px;height:1px;background:#e4e0da"></div>
<span class="t" style="left:61px;top:465px;color:#000;font-size:12px;letter-spacing:-0.8px;word-spacing:1px;">Natixis Solutions Investissement Clôture</span>
<div style="left:43px;top:481px;width:9px;height:12px;border:1px solid #0a55d8;background:#fff"></div>
<div style="left:45px;top:484px;width:7px;height:1px;background:#0a55d8"></div><div style="left:45px;top:486px;width:7px;height:1px;background:#0a55d8"></div><div style="left:45px;top:488px;width:7px;height:1px;background:#0a55d8"></div><div style="left:45px;top:490px;width:7px;height:1px;background:#0a55d8"></div>
<div style="left:45px;top:492px;width:7px;height:1px;background:#e4e0da"></div>
<span class="t" style="left:61px;top:481px;color:#000;font-size:12px;letter-spacing:-0.8px;word-spacing:1px;">OFI Asset Management Clôture</span>
<div style="left:43px;top:497px;width:9px;height:12px;border:1px solid #0a55d8;background:#fff"></div>
<div style="left:45px;top:500px;width:7px;height:1px;background:#0a55d8"></div><div style="left:45px;top:502px;width:7px;height:1px;background:#0a55d8"></div><div style="left:45px;top:504px;width:7px;height:1px;background:#0a55d8"></div><div style="left:45px;top:506px;width:7px;height:1px;background:#0a55d8"></div>
<div style="left:45px;top:508px;width:7px;height:1px;background:#e4e0da"></div>
<span class="t" style="left:61px;top:497px;color:#000;font-size:12px;letter-spacing:-0.8px;word-spacing:1px;">Primaliance SCPI Clôture</span>
<div style="left:43px;top:513px;width:9px;height:12px;border:1px solid #0a55d8;background:#fff"></div>
<div style="left:45px;top:516px;width:7px;height:1px;background:#0a55d8"></div><div style="left:45px;top:518px;width:7px;height:1px;background:#0a55d8"></div><div style="left:45px;top:520px;width:7px;height:1px;background:#0a55d8"></div><div style="left:45px;top:522px;width:7px;height:1px;background:#0a55d8"></div>
<div style="left:45px;top:524px;width:7px;height:1px;background:#e4e0da"></div>
<span class="t" style="left:61px;top:513px;color:#000;font-size:12px;letter-spacing:-0.8px;word-spacing:1px;">Quantalys 1 Clôture</span>
</div>
<div style="left:252px;top:98px;width:1px;height:528px;background:#fdfdfd;"></div>
<div style="left:253px;top:98px;width:16px;height:545px;background:#f0f0f0;"></div>
<div style="left:253px;top:179px;width:15px;height:302px;background:#cdcdcd;"></div>
<svg style="left:253px;top:98px" width="16" height="528"><path d="M4.6 11.6L7.5 7.4L10.4 11.6" stroke="#606060" stroke-width="2" fill="none"/><path d="M4.6 517.4L7.5 521.6L10.4 517.4" stroke="#606060" stroke-width="2" fill="none"/></svg>
<div style="left:13px;top:626px;width:240px;height:17px;background:#f0f0f0;"></div>
<div style="left:30px;top:627px;width:167px;height:15px;background:#cdcdcd;"></div>
<svg style="left:14px;top:626px" width="239" height="17"><path d="M9.6 5.6L5.4 8.5L9.6 11.4" stroke="#606060" stroke-width="2" fill="none"/><path d="M227.4 5.6L231.6 8.5L227.4 11.4" stroke="#606060" stroke-width="2" fill="none"/></svg>
<div style="left:287px;top:80px;width:844px;height:552px;background:#fff;border:1px solid #d9d9d9;box-sizing:border-box;"></div>
<div style="left:289px;top:55px;width:74px;height:26px;background:#f0f0f0;border:1px solid #d9d9d9;box-sizing:border-box;"></div>
<span class="t" style="left:294px;top:62px;color:#000;font-size:12px;letter-spacing:-0.7px;">Configuration</span>
<div style="left:362px;top:55px;width:66px;height:26px;background:#f0f0f0;border:1px solid #d9d9d9;box-sizing:border-box;"></div>
<span class="t" style="left:368px;top:62px;color:#000;font-size:12px;letter-spacing:-0.7px;">Paramètres</span>
<div style="left:427px;top:55px;width:60px;height:26px;background:#f0f0f0;border:1px solid #d9d9d9;box-sizing:border-box;"></div>
<span class="t" style="left:433px;top:62px;color:#000;font-size:12px;letter-spacing:-0.7px;">Propriétés</span>
<div style="left:486px;top:55px;width:62px;height:26px;background:#f0f0f0;border:1px solid #d9d9d9;box-sizing:border-box;"></div>
<span class="t" style="left:491px;top:62px;color:#000;font-size:12px;letter-spacing:-0.7px;">Connexion</span>
<div style="left:636px;top:55px;width:74px;height:26px;background:#f0f0f0;border:1px solid #d9d9d9;box-sizing:border-box;"></div>
<span class="t" style="left:640px;top:62px;color:#000;font-size:12px;letter-spacing:-0.7px;">Déconnexion</span>
<div style="left:709px;top:55px;width:78px;height:26px;background:#f0f0f0;border:1px solid #d9d9d9;box-sizing:border-box;"></div>
<span class="t" style="left:715px;top:62px;color:#000;font-size:12px;letter-spacing:-0.7px;">Structure Html</span>
<div style="left:547px;top:53px;width:90px;height:29px;background:#fff;border:1px solid #d9d9d9;border-bottom:none;box-sizing:border-box;"></div>
<span class="t" style="left:555px;top:60px;color:#000;font-size:12px;letter-spacing:-0.7px;">Navigation web</span>
<div style="left:291px;top:82px;width:838px;height:23px;background:#f0f0f0;"></div>
<div style="left:291px;top:105px;width:838px;height:1px;background:#ecf1f8;"></div>
<div style="left:339px;top:84px;width:1px;height:21px;background:#8a8a8a;"></div>
<svg style="left:296px;top:88px" width="100" height="16" viewBox="296 88 100 16"><path d="M302 91h2v3h3v2h-3v3h-2v-3h-3v-2h3z" fill="#7a7a7a" opacity="0.6"/><path d="M301 90h2v3h3v2h-3v3h-2v-3h-3v-2h3z" fill="#10c010"/><rect x="322" y="94" width="8" height="3" fill="#7a7a7a" opacity="0.6"/><rect x="321" y="93" width="8" height="3" fill="#e00000"/><path d="M354.5 88L360 94H357V98H352V94H349Z" fill="#1ca2f2"/><path d="M375 91H380V95H383L377.5 101L372 95H375Z" fill="#1ca2f2"/></svg>
<div style="left:291px;top:107px;width:838px;height:522px;background:#400000;"></div>
<div style="left:291px;top:317px;width:1px;height:312px;background:#2c0000;"></div>
<div style="left:1128px;top:317px;width:1px;height:312px;background:#2c0000;"></div>
<div style="left:291px;top:628px;width:838px;height:1px;background:#2c0000;"></div>
<div style="left:291px;top:317px;width:838px;height:1px;background:#380000;"></div>
<div style="left:291px;top:107px;width:838px;height:1px;background:#a0a0a0;"></div>
<div style="left:291px;top:107px;width:1px;height:210px;background:#a0a0a0;"></div>
<div style="left:1128px;top:127px;width:1px;height:190px;background:#a0a0a0;"></div>
<div style="left:1128px;top:108px;width:1px;height:19px;background:#fff;"></div>
<div style="left:1128px;top:109px;width:1px;height:18px;background:#e3e3e3;"></div>
<div style="left:292px;top:108px;width:836px;height:19px;background:#fff;"></div>
<div style="left:311px;top:108px;width:1px;height:19px;background:#a0a0a0;"></div>
<div style="left:361px;top:109px;width:1px;height:18px;background:#e5e5e5;"></div>
<div style="left:489px;top:109px;width:1px;height:18px;background:#e5e5e5;"></div>
<div style="left:292px;top:127px;width:836px;height:1px;background:#a0a0a0;"></div>
<span class="t" style="left:323px;top:111px;color:#000;font-size:12px;letter-spacing:-0.7px;">Ordre</span>
<span class="t" style="left:369px;top:111px;color:#000;font-size:12px;letter-spacing:-0.7px;">Navigation</span>
<span class="t" style="left:497px;top:111px;color:#000;font-size:12px;letter-spacing:-0.7px;">Valeur</span>
<div style="left:292px;top:128px;width:19px;height:21px;background:#fff;"></div>
<div style="left:293px;top:148px;width:18px;height:1px;background:#e3e3e3;"></div>
<div style="left:311px;top:128px;width:1px;height:21px;background:#a0a0a0;"></div>
<div style="left:312px;top:128px;width:49px;height:20px;background:#fff;"></div>
<div style="left:361px;top:128px;width:1px;height:21px;background:#a0a0a0;"></div>
<div style="left:362px;top:128px;width:127px;height:20px;background:#e1e1e1;border:1px solid #a8a8a8;border-bottom:none;box-sizing:border-box;"></div>
<div style="left:472px;top:129px;width:1px;height:19px;background:#adadad;"></div>
<svg style="left:475px;top:135px" width="11" height="7"><path d="M1 1.5L5.5 5.5L10 1.5" stroke="#3c3c3c" stroke-width="1" fill="none"/></svg>
<div style="left:489px;top:128px;width:1px;height:21px;background:#a0a0a0;"></div>
<div style="left:490px;top:128px;width:638px;height:20px;background:#fff;"></div>
<div style="left:312px;top:148px;width:816px;height:1px;background:#a0a0a0;"></div>
<span class="t" style="left:312px;top:132px;width:49px;text-align:center;color:#000;font-size:12px;letter-spacing:-0.7px">1</span>
<span class="t" style="left:365px;top:132px;color:#000;font-size:12px;letter-spacing:-0.7px;">Sleep (ms)</span>
<span class="t" style="left:493px;top:132px;color:#000;font-size:12px;letter-spacing:-0.7px;">3000</span>
<div style="left:292px;top:149px;width:19px;height:21px;background:#fff;"></div>
<div style="left:293px;top:169px;width:18px;height:1px;background:#e3e3e3;"></div>
<div style="left:311px;top:149px;width:1px;height:21px;background:#a0a0a0;"></div>
<div style="left:312px;top:149px;width:49px;height:20px;background:#fcf8f7;"></div>
<div style="left:361px;top:149px;width:1px;height:21px;background:#a0a0a0;"></div>
<div style="left:362px;top:149px;width:127px;height:20px;background:#e1e1e1;border:1px solid #a8a8a8;border-bottom:none;box-sizing:border-box;"></div>
<div style="left:472px;top:150px;width:1px;height:19px;background:#adadad;"></div>
<svg style="left:475px;top:156px" width="11" height="7"><path d="M1 1.5L5.5 5.5L10 1.5" stroke="#3c3c3c" stroke-width="1" fill="none"/></svg>
<div style="left:489px;top:149px;width:1px;height:21px;background:#a0a0a0;"></div>
<div style="left:490px;top:149px;width:638px;height:20px;background:#fcf8f7;"></div>
<div style="left:312px;top:169px;width:816px;height:1px;background:#a0a0a0;"></div>
<span class="t" style="left:312px;top:153px;width:49px;text-align:center;color:#000;font-size:12px;letter-spacing:-0.7px">2</span>
<span class="t" style="left:365px;top:153px;color:#000;font-size:12px;letter-spacing:-0.7px;">GetElementByXPath</span>
<span class="t" style="left:493px;top:153px;color:#000;font-size:12px;letter-spacing:-0.25px;">(//p[contains(.,&quot;{0}&quot;)])[1]</span>
<div style="left:292px;top:170px;width:19px;height:21px;background:#fff;"></div>
<div style="left:293px;top:190px;width:18px;height:1px;background:#e3e3e3;"></div>
<div style="left:311px;top:170px;width:1px;height:21px;background:#a0a0a0;"></div>
<div style="left:312px;top:170px;width:49px;height:20px;background:#fff;"></div>
<div style="left:361px;top:170px;width:1px;height:21px;background:#a0a0a0;"></div>
<div style="left:362px;top:170px;width:127px;height:20px;background:#e1e1e1;border:1px solid #a8a8a8;border-bottom:none;box-sizing:border-box;"></div>
<div style="left:472px;top:171px;width:1px;height:19px;background:#adadad;"></div>
<svg style="left:475px;top:177px" width="11" height="7"><path d="M1 1.5L5.5 5.5L10 1.5" stroke="#3c3c3c" stroke-width="1" fill="none"/></svg>
<div style="left:489px;top:170px;width:1px;height:21px;background:#a0a0a0;"></div>
<div style="left:490px;top:170px;width:638px;height:20px;background:#fff;"></div>
<div style="left:312px;top:190px;width:816px;height:1px;background:#a0a0a0;"></div>
<span class="t" style="left:312px;top:174px;width:49px;text-align:center;color:#000;font-size:12px;letter-spacing:-0.7px">3</span>
<span class="t" style="left:365px;top:174px;color:#000;font-size:12px;letter-spacing:-0.7px;">EventOnElement</span>
<span class="t" style="left:493px;top:174px;color:#000;font-size:12px;letter-spacing:-0.7px;">click</span>
<div style="left:292px;top:191px;width:19px;height:21px;background:#fff;"></div>
<div style="left:293px;top:211px;width:18px;height:1px;background:#e3e3e3;"></div>
<div style="left:311px;top:191px;width:1px;height:21px;background:#a0a0a0;"></div>
<div style="left:312px;top:191px;width:49px;height:20px;background:#fcf8f7;"></div>
<div style="left:361px;top:191px;width:1px;height:21px;background:#a0a0a0;"></div>
<div style="left:362px;top:191px;width:127px;height:20px;background:#e1e1e1;border:1px solid #a8a8a8;border-bottom:none;box-sizing:border-box;"></div>
<div style="left:472px;top:192px;width:1px;height:19px;background:#adadad;"></div>
<svg style="left:475px;top:198px" width="11" height="7"><path d="M1 1.5L5.5 5.5L10 1.5" stroke="#3c3c3c" stroke-width="1" fill="none"/></svg>
<div style="left:489px;top:191px;width:1px;height:21px;background:#a0a0a0;"></div>
<div style="left:490px;top:191px;width:638px;height:20px;background:#fcf8f7;"></div>
<div style="left:312px;top:211px;width:816px;height:1px;background:#a0a0a0;"></div>
<span class="t" style="left:312px;top:195px;width:49px;text-align:center;color:#000;font-size:12px;letter-spacing:-0.7px">4</span>
<span class="t" style="left:365px;top:195px;color:#000;font-size:12px;letter-spacing:-0.7px;">Sleep (ms)</span>
<span class="t" style="left:493px;top:195px;color:#000;font-size:12px;letter-spacing:-0.7px;">2000</span>
<div style="left:292px;top:212px;width:19px;height:21px;background:#fff;"></div>
<div style="left:293px;top:232px;width:18px;height:1px;background:#e3e3e3;"></div>
<div style="left:293px;top:212px;width:18px;height:21px;background:#bcdcf4;"></div>
<div style="left:311px;top:212px;width:1px;height:21px;background:#a0a0a0;"></div>
<div style="left:312px;top:212px;width:49px;height:20px;background:#3399ff;"></div>
<div style="left:361px;top:212px;width:1px;height:21px;background:#a0a0a0;"></div>
<div style="left:362px;top:212px;width:127px;height:20px;background:#e1e1e1;border:1px solid #a8a8a8;border-bottom:none;box-sizing:border-box;"></div>
<div style="left:472px;top:213px;width:1px;height:19px;background:#adadad;"></div>
<svg style="left:475px;top:219px" width="11" height="7"><path d="M1 1.5L5.5 5.5L10 1.5" stroke="#3c3c3c" stroke-width="1" fill="none"/></svg>
<div style="left:489px;top:212px;width:1px;height:21px;background:#a0a0a0;"></div>
<div style="left:490px;top:212px;width:638px;height:20px;background:#3399ff;"></div>
<div style="left:312px;top:232px;width:816px;height:1px;background:#a0a0a0;"></div>
<span class="t" style="left:312px;top:216px;width:49px;text-align:center;color:#fff;font-size:12px;letter-spacing:-0.7px">5</span>
<span class="t" style="left:365px;top:216px;color:#000;font-size:12px;letter-spacing:-0.7px;">GetElementByXPath</span>
<span class="t" style="left:493px;top:216px;color:#fff;font-size:12px;letter-spacing:-0.35px;">(//button[contains(.,&quot;3 ans&quot;)])[1]</span>
<div style="left:292px;top:233px;width:19px;height:21px;background:#fff;"></div>
<div style="left:293px;top:253px;width:18px;height:1px;background:#e3e3e3;"></div>
<div style="left:311px;top:233px;width:1px;height:21px;background:#a0a0a0;"></div>
<div style="left:312px;top:233px;width:49px;height:20px;background:#fcf8f7;"></div>
<div style="left:361px;top:233px;width:1px;height:21px;background:#a0a0a0;"></div>
<div style="left:362px;top:233px;width:127px;height:20px;background:#e1e1e1;border:1px solid #a8a8a8;border-bottom:none;box-sizing:border-box;"></div>
<div style="left:472px;top:234px;width:1px;height:19px;background:#adadad;"></div>
<svg style="left:475px;top:240px" width="11" height="7"><path d="M1 1.5L5.5 5.5L10 1.5" stroke="#3c3c3c" stroke-width="1" fill="none"/></svg>
<div style="left:489px;top:233px;width:1px;height:21px;background:#a0a0a0;"></div>
<div style="left:490px;top:233px;width:638px;height:20px;background:#fcf8f7;"></div>
<div style="left:312px;top:253px;width:816px;height:1px;background:#a0a0a0;"></div>
<span class="t" style="left:312px;top:237px;width:49px;text-align:center;color:#000;font-size:12px;letter-spacing:-0.7px">6</span>
<span class="t" style="left:365px;top:237px;color:#000;font-size:12px;letter-spacing:-0.7px;">EventOnElement</span>
<span class="t" style="left:493px;top:237px;color:#000;font-size:12px;letter-spacing:-0.7px;">click</span>
<div style="left:292px;top:254px;width:19px;height:21px;background:#fff;"></div>
<div style="left:293px;top:274px;width:18px;height:1px;background:#e3e3e3;"></div>
<div style="left:311px;top:254px;width:1px;height:21px;background:#a0a0a0;"></div>
<div style="left:312px;top:254px;width:49px;height:20px;background:#fff;"></div>
<div style="left:361px;top:254px;width:1px;height:21px;background:#a0a0a0;"></div>
<div style="left:362px;top:254px;width:127px;height:20px;background:#e1e1e1;border:1px solid #a8a8a8;border-bottom:none;box-sizing:border-box;"></div>
<div style="left:472px;top:255px;width:1px;height:19px;background:#adadad;"></div>
<svg style="left:475px;top:261px" width="11" height="7"><path d="M1 1.5L5.5 5.5L10 1.5" stroke="#3c3c3c" stroke-width="1" fill="none"/></svg>
<div style="left:489px;top:254px;width:1px;height:21px;background:#a0a0a0;"></div>
<div style="left:490px;top:254px;width:638px;height:20px;background:#fff;"></div>
<div style="left:312px;top:274px;width:816px;height:1px;background:#a0a0a0;"></div>
<span class="t" style="left:312px;top:258px;width:49px;text-align:center;color:#000;font-size:12px;letter-spacing:-0.7px">7</span>
<span class="t" style="left:365px;top:258px;color:#000;font-size:12px;letter-spacing:-0.7px;">Sleep (ms)</span>
<span class="t" style="left:493px;top:258px;color:#000;font-size:12px;letter-spacing:-0.7px;">1800</span>
<div style="left:292px;top:275px;width:19px;height:21px;background:#fff;"></div>
<div style="left:293px;top:295px;width:18px;height:1px;background:#e3e3e3;"></div>
<div style="left:311px;top:275px;width:1px;height:21px;background:#a0a0a0;"></div>
<div style="left:312px;top:275px;width:49px;height:20px;background:#fcf8f7;"></div>
<div style="left:361px;top:275px;width:1px;height:21px;background:#a0a0a0;"></div>
<div style="left:362px;top:275px;width:127px;height:20px;background:#e1e1e1;border:1px solid #a8a8a8;border-bottom:none;box-sizing:border-box;"></div>
<div style="left:472px;top:276px;width:1px;height:19px;background:#adadad;"></div>
<svg style="left:475px;top:282px" width="11" height="7"><path d="M1 1.5L5.5 5.5L10 1.5" stroke="#3c3c3c" stroke-width="1" fill="none"/></svg>
<div style="left:489px;top:275px;width:1px;height:21px;background:#a0a0a0;"></div>
<div style="left:490px;top:275px;width:638px;height:20px;background:#fcf8f7;"></div>
<div style="left:312px;top:295px;width:816px;height:1px;background:#a0a0a0;"></div>
<span class="t" style="left:312px;top:279px;width:49px;text-align:center;color:#000;font-size:12px;letter-spacing:-0.7px">8</span>
<span class="t" style="left:365px;top:279px;color:#000;font-size:12px;letter-spacing:-0.7px;">GetElementByXPath</span>
<span class="t" style="left:493px;top:279px;color:#000;font-size:12px;letter-spacing:-0.53px;">//a[@class=&quot;ea6-component-fund-detail-download-vl-link&quot;]</span>
<div style="left:292px;top:296px;width:19px;height:21px;background:#fff;"></div>
<div style="left:311px;top:296px;width:1px;height:21px;background:#a0a0a0;"></div>
<div style="left:312px;top:296px;width:49px;height:20px;background:#fff;"></div>
<div style="left:361px;top:296px;width:1px;height:21px;background:#a0a0a0;"></div>
<div style="left:362px;top:296px;width:127px;height:20px;background:#e1e1e1;border:1px solid #a8a8a8;border-bottom:none;box-sizing:border-box;"></div>
<div style="left:472px;top:297px;width:1px;height:19px;background:#adadad;"></div>
<svg style="left:475px;top:303px" width="11" height="7"><path d="M1 1.5L5.5 5.5L10 1.5" stroke="#3c3c3c" stroke-width="1" fill="none"/></svg>
<div style="left:489px;top:296px;width:1px;height:21px;background:#a0a0a0;"></div>
<div style="left:490px;top:296px;width:638px;height:20px;background:#fff;"></div>
<div style="left:312px;top:316px;width:816px;height:1px;background:#a0a0a0;"></div>
<span class="t" style="left:312px;top:300px;width:49px;text-align:center;color:#000;font-size:12px;letter-spacing:-0.7px">9</span>
<span class="t" style="left:365px;top:300px;color:#000;font-size:12px;letter-spacing:-0.7px;">EventOnElement</span>
<span class="t" style="left:493px;top:300px;color:#000;font-size:12px;letter-spacing:-0.7px;">clicksave</span>
<div style="left:951px;top:656px;width:92px;height:23px;background:#cccccc;border:1px solid #bfbfbf;box-sizing:border-box;"></div>
<span class="t" style="left:951px;top:660px;width:92px;text-align:center;color:#a0a0a0;font-size:11.5px;letter-spacing:-0.5px">Enregistrer</span>
<div style="left:1051px;top:656px;width:92px;height:23px;background:#e1e1e1;border:1px solid #adadad;box-sizing:border-box;"></div>
<span class="t" style="left:1051px;top:660px;width:92px;text-align:center;color:#000;font-size:11.5px;letter-spacing:-0.5px">Fermer</span>
<div style="left:1151px;top:682px;width:2px;height:2px;background:#b8b8b8;"></div>
<div style="left:1148px;top:685px;width:2px;height:2px;background:#b8b8b8;"></div>
<div style="left:1151px;top:685px;width:2px;height:2px;background:#b8b8b8;"></div>
<div style="left:1145px;top:688px;width:2px;height:2px;background:#b8b8b8;"></div>
<div style="left:1148px;top:688px;width:2px;height:2px;background:#b8b8b8;"></div>
<div style="left:1151px;top:688px;width:2px;height:2px;background:#b8b8b8;"></div>
</body></html>
